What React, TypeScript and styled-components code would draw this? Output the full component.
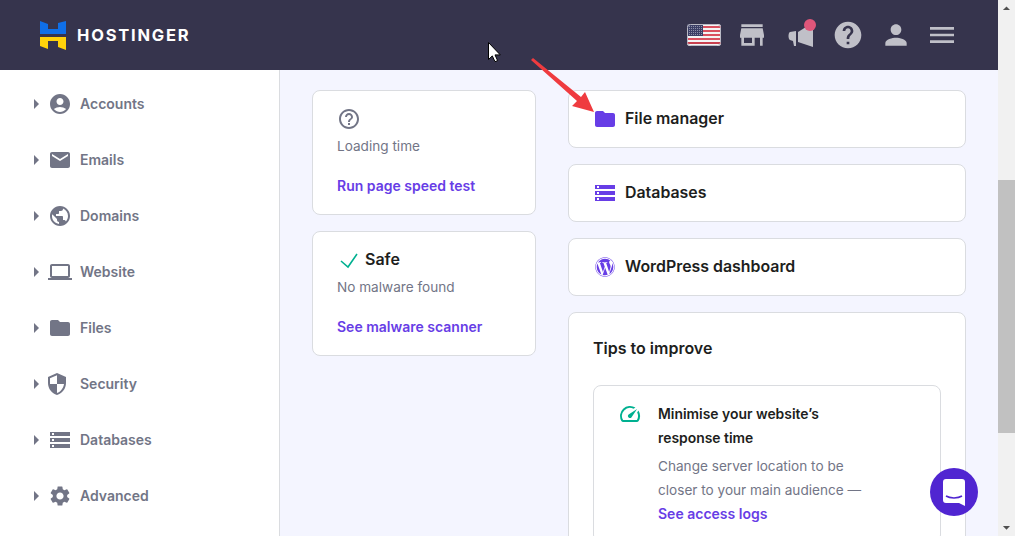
import React from "react";
import styled, { createGlobalStyle } from "styled-components";
import {
  MdAccountCircle,
  MdArrowDropDown,
  MdArrowDropUp,
  MdArrowRight,
  MdEmail,
  MdFolder,
  MdHelp,
  MdHelpOutline,
  MdLaptop,
  MdMenu,
  MdPerson,
  MdPublic,
  MdSecurity,
  MdSettings,
  MdSpeed,
  MdStorage,
  MdStore,
} from "react-icons/md";
import { FaWordpress } from "react-icons/fa";

const GlobalStyle = createGlobalStyle`
  html, body {
    margin: 0;
    padding: 0;
    height: 100%;
    overflow: hidden;
  }
  body {
    font-family: "Inter", "Liberation Sans", sans-serif;
    color: #1d1e20;
  }
`;

const Page = styled.div`
  position: relative;
  display: flex;
  width: 1015px;
  height: 536px;
  overflow: hidden;
`;

const Content = styled.div`
  display: flex;
  flex-direction: column;
  width: 998px;
  height: 536px;
`;

const Header = styled.header`
  display: flex;
  flex: none;
  align-items: center;
  justify-content: space-between;
  height: 70px;
  padding: 0 40px;
  box-sizing: border-box;
  background: #36344d;
`;

const Brand = styled.div`
  display: flex;
  align-items: center;
  gap: 11px;
`;

const BrandName = styled.span`
  color: #fff;
  font-size: 16.5px;
  font-weight: 700;
  letter-spacing: 1.8px;
`;

const HeaderIcons = styled.nav`
  display: flex;
  align-items: center;
  gap: 16px;
  color: #c0c0c8;
`;

const HeaderSlot = styled.span<{ $tight?: boolean }>`
  position: relative;
  display: flex;
  align-items: center;
  justify-content: center;
  width: 32px;
  height: 32px;
  margin-left: ${(p) => (p.$tight ? -2 : 0)}px;

  svg {
    flex: none;
  }
`;

const Dot = styled.span`
  position: absolute;
  top: 0;
  right: 0;
  width: 12px;
  height: 12px;
  border-radius: 50%;
  background: #e0567a;
`;

const Body = styled.div`
  display: flex;
  flex: 1;
  min-height: 0;
`;

const Sidebar = styled.aside`
  flex: none;
  width: 280px;
  padding: 6px 0 0 24px;
  box-sizing: border-box;
  background: #fff;
  border-right: 1px solid #dadce0;
`;

const SideRow = styled.div`
  display: flex;
  align-items: center;
  height: 56px;
  color: #727586;
`;

const SideIcon = styled.span<{ $shift?: number }>`
  display: flex;
  width: 24px;
  height: 24px;
  margin-right: 8px;
  transform: translateX(${(p) => p.$shift ?? 0}px);
`;

const SideLabel = styled.span`
  margin-bottom: 2px;
  font-size: 14px;
  font-weight: 600;
`;

const Main = styled.main`
  display: flex;
  flex: 1;
  gap: 32px;
  padding: 20px 32px 0;
  overflow: hidden;
  background: #f4f5ff;
`;

const Column = styled.div<{ $width: number; $gap: number }>`
  display: flex;
  flex: none;
  flex-direction: column;
  gap: ${(p) => p.$gap}px;
  width: ${(p) => p.$width}px;
`;

const Card = styled.section`
  flex: none;
  box-sizing: border-box;
  background: #fff;
  border: 1px solid #dadce0;
  border-radius: 8px;
`;

const StatCard = styled(Card)`
  height: 125px;
  padding: 16px 24px;
`;

const StatHead = styled.div`
  display: flex;
  align-items: center;
  gap: 4px;
  height: 24px;
  color: #727586;
`;

const StatTitle = styled.span`
  margin-bottom: 2px;
  color: #1d1e20;
  font-size: 16px;
  font-weight: 600;
`;

const Muted = styled.p`
  margin: 0;
  color: #727586;
  font-size: 13.6px;
  line-height: 24px;
`;

const StatText = styled(Muted)`
  margin-top: 3px;
`;

const Link = styled.a`
  display: block;
  color: #673de6;
  font-size: 14px;
  font-weight: 600;
  line-height: 24px;
`;

const StatLink = styled(Link)`
  margin-top: 16px;
`;

const LinkCard = styled(Card)`
  display: flex;
  align-items: center;
  gap: 8px;
  height: 58px;
  padding: 0 24px;
  color: #673de6;
`;

const LinkTitle = styled.span`
  margin-bottom: 2px;
  color: #1d1e20;
  font-size: 15.9px;
  font-weight: 600;
`;

const WordpressMark = styled(FaWordpress)`
  flex: none;
  margin: 0 2px;
`;

const TipsCard = styled(Card)`
  padding: 23px 24px 0;
  height: 400px;
`;

const TipsTitle = styled.h2`
  margin: 0 0 25px;
  font-size: 16px;
  font-weight: 600;
  line-height: 24px;
`;

const Tip = styled(Card)`
  display: flex;
  gap: 16px;
  padding: 16px 24px;
`;

const TipIcon = styled.span`
  display: flex;
  flex: none;
  height: 24px;
  color: #00b090;
`;

const TipTitle = styled.h3`
  margin: 0 0 4px;
  font-size: 13.9px;
  font-weight: 600;
  line-height: 24px;
  max-width: 200px;
`;

const ScrollTrack = styled.div`
  display: flex;
  flex: none;
  flex-direction: column;
  align-items: center;
  width: 17px;
  height: 536px;
  background: #f1f1f1;
  color: #505050;
`;

const ScrollButton = styled.div`
  display: flex;
  flex: none;
  align-items: center;
  justify-content: center;
  height: 17px;
`;

const ScrollGutter = styled.div`
  flex: 1;
  width: 100%;
  padding-top: 163px;
  box-sizing: border-box;
`;

const ScrollThumb = styled.div`
  width: 100%;
  height: 253px;
  background: #c1c1c1;
`;

const ChatBubble = styled.div`
  position: absolute;
  left: 930px;
  top: 468px;
  display: flex;
  align-items: center;
  justify-content: center;
  width: 48px;
  height: 48px;
  border-radius: 50%;
  background: #5025d1;
`;

const Overlay = styled.svg`
  position: absolute;
  left: 0;
  top: 0;
  pointer-events: none;
`;

const sideItems = [
  { label: "Accounts", icon: <MdAccountCircle size={24} /> },
  { label: "Emails", icon: <MdEmail size={24} /> },
  { label: "Domains", icon: <MdPublic size={24} /> },
  { label: "Website", icon: <MdLaptop size={24} /> },
  { label: "Files", icon: <MdFolder size={24} /> },
  { label: "Security", icon: <MdSecurity size={24} />, shift: -3 },
  { label: "Databases", icon: <MdStorage size={24} /> },
  { label: "Advanced", icon: <MdSettings size={24} /> },
];

const Logo = () => (
  <svg width="26" height="29" viewBox="0 0 26 29">
    <path d="M0 0l8 3v5h10V2l8-2v13H0z" fill="#0f6fe8" />
    <path d="M0 16h26v13l-8-3v-6H8v8l-8-3z" fill="#ffd20a" />
  </svg>
);

const Flag = () => (
  <svg width="34" height="22" viewBox="0 0 34 22">
    <defs>
      <clipPath id="flag-clip">
        <rect x="0" y="0" width="34" height="22" rx="3" />
      </clipPath>
      <pattern id="flag-stars" width="2" height="2" patternUnits="userSpaceOnUse">
        <rect width="1" height="1" fill="#8c8fa8" />
      </pattern>
    </defs>
    <g clipPath="url(#flag-clip)">
      <rect width="34" height="22" fill="#f4f4f4" />
      <rect y="2" width="34" height="2" fill="#d9505f" />
      <rect y="6" width="34" height="2" fill="#d9505f" />
      <rect y="10" width="34" height="2" fill="#d9505f" />
      <rect y="14" width="34" height="2" fill="#d9505f" />
      <rect y="18" width="34" height="2" fill="#c8404f" />
      <rect width="16" height="12" fill="#3c3f66" />
      <rect width="16" height="12" fill="url(#flag-stars)" />
    </g>
    <rect x="0.5" y="0.5" width="33" height="21" rx="3" fill="none" stroke="#b9b9c4" />
  </svg>
);

const Megaphone = () => (
  <svg width="32" height="32" viewBox="0 0 32 32" fill="currentColor">
    <path d="M12 12l-6 1c-2 1-2 7 0 8l3 1 1 5h2z" />
    <path d="M14 13l8-5h7v20l-15-5z" />
  </svg>
);

const App: React.FC = () => {
  return (
    <>
      <GlobalStyle />
      <Page>
        <Content>
          <Header>
            <Brand>
              <Logo />
              <BrandName>HOSTINGER</BrandName>
            </Brand>
            <HeaderIcons>
              <HeaderSlot>
                <Flag />
              </HeaderSlot>
              <HeaderSlot>
                <MdStore size={32} />
              </HeaderSlot>
              <HeaderSlot>
                <Megaphone />
                <Dot />
              </HeaderSlot>
              <HeaderSlot>
                <MdHelp size={32} />
              </HeaderSlot>
              <HeaderSlot>
                <MdPerson size={32} />
              </HeaderSlot>
              <HeaderSlot $tight>
                <MdMenu size={32} />
              </HeaderSlot>
            </HeaderIcons>
          </Header>
          <Body>
            <Sidebar>
              {sideItems.map((item) => (
                <SideRow key={item.label}>
                  <MdArrowRight size={24} />
                  <SideIcon $shift={item.shift}>{item.icon}</SideIcon>
                  <SideLabel>{item.label}</SideLabel>
                </SideRow>
              ))}
            </Sidebar>
            <Main>
              <Column $width={224} $gap={16}>
                <StatCard>
                  <StatHead>
                    <MdHelpOutline size={24} />
                  </StatHead>
                  <StatText>Loading time</StatText>
                  <StatLink>Run page speed test</StatLink>
                </StatCard>
                <StatCard>
                  <StatHead>
                    <svg width="24" height="24" viewBox="0 0 24 24" fill="none" stroke="#00b090" strokeWidth="1.6">
                      <path d="M4 13l7 6L20 6" />
                    </svg>
                    <StatTitle>Safe</StatTitle>
                  </StatHead>
                  <StatText>No malware found</StatText>
                  <StatLink>See malware scanner</StatLink>
                </StatCard>
              </Column>
              <Column $width={398} $gap={16}>
                <LinkCard>
                  <MdFolder size={24} />
                  <LinkTitle>File manager</LinkTitle>
                </LinkCard>
                <LinkCard>
                  <MdStorage size={24} />
                  <LinkTitle>Databases</LinkTitle>
                </LinkCard>
                <LinkCard>
                  <WordpressMark size={20} />
                  <LinkTitle>WordPress dashboard</LinkTitle>
                </LinkCard>
                <TipsCard>
                  <TipsTitle>Tips to improve</TipsTitle>
                  <Tip>
                    <TipIcon>
                      <MdSpeed size={24} />
                    </TipIcon>
                    <div>
                      <TipTitle>Minimise your website’s response time</TipTitle>
                      <Muted>
                        Change server location to be
                        <br />
                        closer to your main audience —
                      </Muted>
                      <Link>See access logs</Link>
                    </div>
                  </Tip>
                </TipsCard>
              </Column>
            </Main>
          </Body>
        </Content>
        <ScrollTrack>
          <ScrollButton>
            <MdArrowDropUp size={17} />
          </ScrollButton>
          <ScrollGutter>
            <ScrollThumb />
          </ScrollGutter>
          <ScrollButton>
            <MdArrowDropDown size={17} />
          </ScrollButton>
        </ScrollTrack>
        <ChatBubble>
          <svg width="22" height="27" viewBox="0 0 22 27">
            <path d="M3 0h16a3 3 0 0 1 3 3v24l-6-3H3a3 3 0 0 1-3-3V3a3 3 0 0 1 3-3z" fill="#fff" />
            <path d="M3 17c4 2.500 12 2.500 16 0" fill="none" stroke="#5025d1" strokeWidth="1.500" />
          </svg>
        </ChatBubble>
        <Overlay width="1015" height="536" viewBox="0 0 1015 536">
          <path d="M533 58l48 39 4-5 9 20-22-6 5-5-46-41z" fill="#ef3b3f" />
          <path d="M488.500 42.500v17l3.800-3.600 2.700 5.800 2.600-1.100-2.600-5.700h5.300z" fill="#fff" stroke="#000" strokeWidth="1" />
        </Overlay>
      </Page>
    </>
  );
};

export default App;
